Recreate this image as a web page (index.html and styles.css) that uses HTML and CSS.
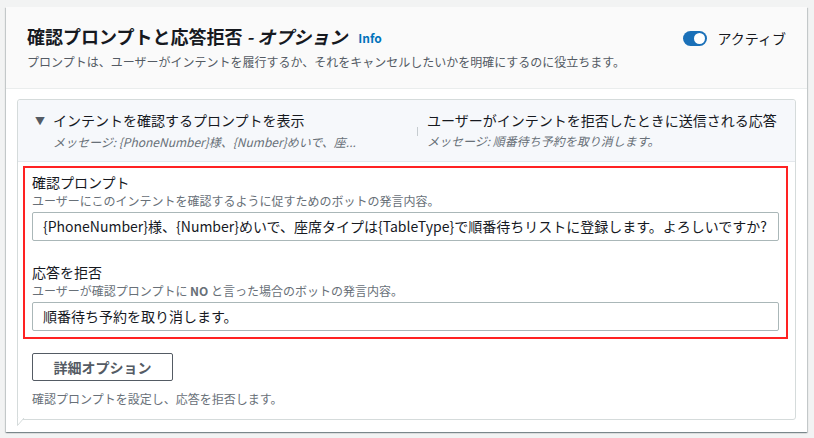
FILE: index.html
```html
<!DOCTYPE html>
<html lang="ja">
<head>
<meta charset="utf-8">
<link rel="stylesheet" href="styles.css">
</head>
<body>
<div class="card">
  <div class="card-header">
    <div class="header-main">
      <h2 class="title">確認プロンプトと応答拒否 <span class="title-opt">- オプション</span><a class="info">Info</a></h2>
      <p class="subtitle">プロンプトは、ユーザーがインテントを履行するか、それをキャンセルしたいかを明確にするのに役立ちます。</p>
    </div>
    <div class="toggle-wrap">
      <span class="toggle"><span class="knob"></span></span>
      <span class="toggle-label">アクティブ</span>
    </div>
  </div>
  <div class="card-body">
    <div class="section">
      <div class="section-header">
        <div class="col col-left">
          <div class="col-title"><span class="caret">▼</span>インテントを確認するプロンプトを表示</div>
          <div class="col-sub">メッセージ: {PhoneNumber}様、{Number}めいで、座...</div>
        </div>
        <div class="col col-right">
          <div class="col-title">ユーザーがインテントを拒否したときに送信される応答</div>
          <div class="col-sub">メッセージ: 順番待ち予約を取り消します。</div>
        </div>
      </div>
      <div class="section-body">
        <div class="highlight">
          <div class="field">
            <div class="label">確認プロンプト</div>
            <div class="desc">ユーザーにこのインテントを確認するように促すためのボットの発言内容。</div>
            <div class="input">{PhoneNumber}様、{Number}めいで、座席タイプは{TableType}で順番待ちリストに登録します。よろしいですか?</div>
          </div>
          <div class="field field-2">
            <div class="label">応答を拒否</div>
            <div class="desc">ユーザーが確認プロンプトに <span class="no">NO</span> と言った場合のボットの発言内容。</div>
            <div class="input">順番待ち予約を取り消します。</div>
          </div>
        </div>
        <div class="actions">
          <button class="btn">詳細オプション</button>
          <div class="help">確認プロンプトを設定し、応答を拒否します。</div>
        </div>
      </div>
      <svg class="tail" width="10" height="9" viewBox="0 0 10 9"><path d="M0.5 0 L0.5 7.5 L7 0" fill="#fff" stroke="#d5dbdb" stroke-width="1"/></svg>
    </div>
  </div>
</div>
</body>
</html>
```

FILE: styles.css
```css
* { box-sizing: border-box; }
html, body { margin: 0; padding: 0; }
body {
  background: #f2f3f3;
  font-family: "Noto Sans CJK JP", "Noto Sans", sans-serif;
  color: #16191f;
  width: 814px;
  height: 438px;
  overflow: hidden;
}
.card {
  margin: 7px 7px 0 6px;
  background: #fff;
  box-shadow: 0 1px 1px 0 rgba(0,28,36,.3), 1px 1px 1px 0 rgba(0,28,36,.15), -1px 1px 1px 0 rgba(0,28,36,.15);
}
.card-header {
  background: #fafafa;
  border-bottom: 1px solid #eaeded;
  padding: 17px 20px 17px 21px;
  display: flex;
  justify-content: space-between;
  align-items: flex-start;
}
.title {
  margin: 0;
  font-size: 18px;
  line-height: 24px;
  font-weight: 700;
  color: #16191f;
}
.title-opt { font-style: italic; }
.info {
  font-size: 12px;
  font-weight: 700;
  color: #0073bb;
  margin-left: 11px;
  vertical-align: 1px;
}
.subtitle {
  margin: 3px 0 0;
  font-size: 12px;
  line-height: 18px;
  color: #545b64;
}
.toggle-wrap {
  display: flex;
  align-items: center;
  gap: 11px;
  margin-top: 5px;
  margin-right: 1px;
}
.toggle {
  width: 24px;
  height: 15px;
  border-radius: 8px;
  background: #1a70b8;
  position: relative;
  display: block;
}
.knob {
  position: absolute;
  width: 11px;
  height: 11px;
  border-radius: 50%;
  background: #fff;
  top: 2px;
  right: 2px;
}
.toggle-label {
  font-size: 14px;
  line-height: 18px;
  color: #16191f;
}
.card-body {
  padding: 10px 11px 12px 11px;
}
.section {
  border: 1px solid #d5dbdb;
  border-radius: 3px;
  position: relative;
}
.section-header {
  background: #f6f8fb;
  border-bottom: 1px solid #e4e8ec;
  border-radius: 3px 3px 0 0;
  padding: 10px 17px 10px 17px;
  display: flex;
}
.col-left { width: 382px; }
.col-right {
  flex: 1;
  padding-left: 10px;
  position: relative;
}
.col-right::before {
  content: "";
  position: absolute;
  left: 0;
  top: 17px;
  height: 9px;
  width: 1px;
  background: #c6ccd0;
}
.col-title {
  font-size: 14px;
  line-height: 20px;
  color: #16191f;
}
.col-left .col-sub { padding-left: 18px; }
.caret {
  display: inline-block;
  width: 18px;
  font-size: 10px;
  color: #545b64;
  vertical-align: 1px;
}
.col-sub {
  margin-top: 2px;
  font-size: 12px;
  line-height: 18px;
  font-style: italic;
  color: #687078;
}
.section-body {
  padding: 4px 7px 11px 5px;
}
.highlight {
  border: 2px solid #ff2222;
  padding: 4px 7px 6px 7px;
}
.label {
  font-size: 14px;
  line-height: 20px;
  color: #16191f;
}
.desc {
  font-size: 12px;
  line-height: 18px;
  color: #687078;
}
.no { font-weight: 700; }
.input {
  margin-top: 2px;
  height: 29px;
  border: 1px solid #aab7b8;
  border-radius: 2px;
  padding: 0 10px;
  font-size: 14px;
  line-height: 27px;
  color: #16191f;
  white-space: nowrap;
  overflow: hidden;
}
.field-2 { margin-top: 21px; }
.actions {
  padding: 14px 0 0 9px;
}
.btn {
  display: block;
  width: 141px;
  height: 28px;
  border: 1px solid #545b64;
  border-radius: 2px;
  background: #fff;
  font-family: inherit;
  font-size: 14px;
  font-weight: 700;
  color: #545b64;
  padding: 0;
}
.help {
  margin-top: 9px;
  font-size: 12px;
  line-height: 18px;
  color: #687078;
}
.tail {
  position: absolute;
  left: -1px;
  bottom: -8px;
}
```
